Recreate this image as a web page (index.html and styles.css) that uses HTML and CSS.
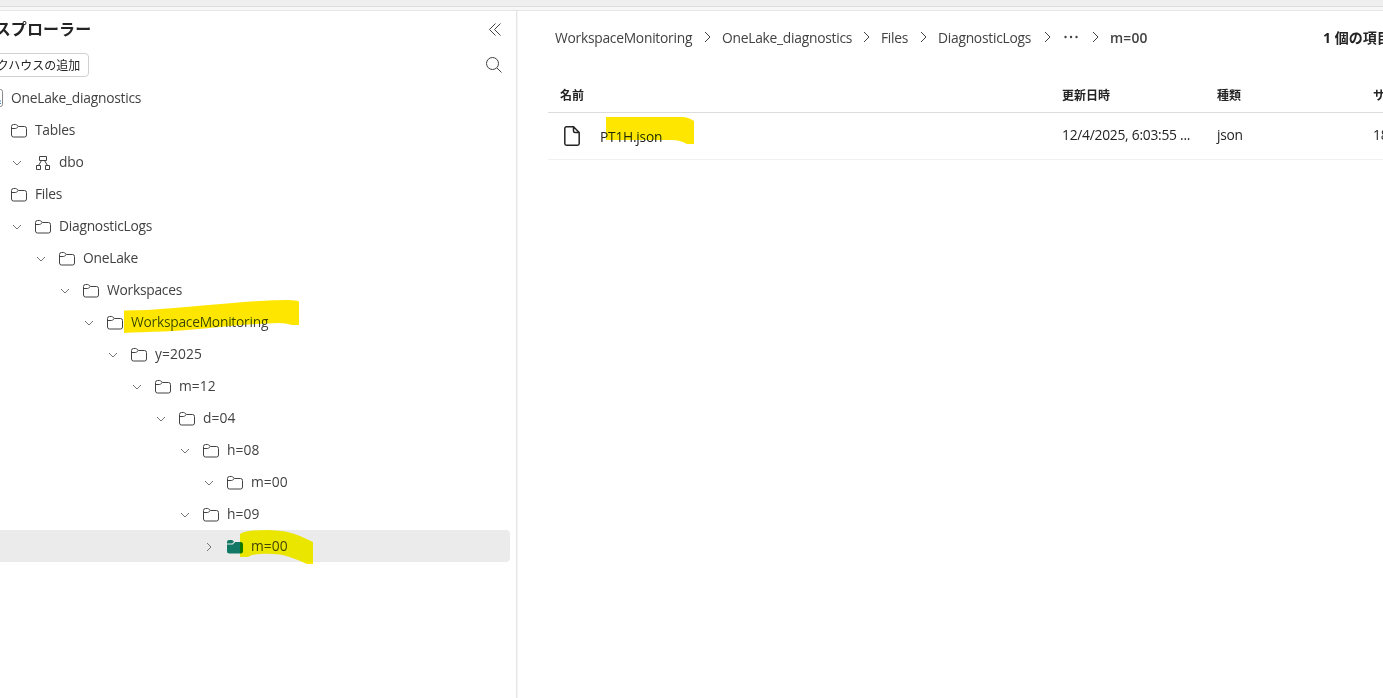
FILE: index.html
```html
<!DOCTYPE html>
<html lang="ja">
<head>
  <meta charset="UTF-8" />
  <title>OneLake_diagnostics</title>
  <link rel="stylesheet" href="styles.css">
</head>
<body>

  <!-- Shared icons -->
  <svg class="sprite" aria-hidden="true">
    <symbol id="folder" viewBox="0 0 18 16">
      <path d="M1.500 4v-.5a2 2 0 0 1 2-2h2.200q.6 0 1 .4L8.300 3.500H14.500a2 2 0 0 1 2 2v6.500a2 2 0 0 1-2 2h-11a2 2 0 0 1-2-2zM1.500 5.500H5.400q.7 0 1.100-.4L8.300 3.500" />
    </symbol>
    <symbol id="folder-filled" viewBox="0 0 18 16">
      <path d="M1 4.500V3.300A2.200 2.200 0 0 1 3.200 1h2.500q.7 0 1.200.5L8 2.700 6.500 4.200q-.3.300-.8.300zM1 5.500h5q.7 0 1.200-.5L9.200 3H14.800A2.200 2.200 0 0 1 17 5.200v7A2.200 2.200 0 0 1 14.800 14.500H3.200A2.200 2.200 0 0 1 1 12.200z" />
    </symbol>
    <symbol id="chevron-down" viewBox="0 0 10 10">
      <path d="M1 3l4 4 4-4" />
    </symbol>
    <symbol id="chevron-right" viewBox="0 0 10 10">
      <path d="M3 1l4 4-4 4" />
    </symbol>
    <symbol id="chevron-crumb" viewBox="0 0 12 12">
      <path d="M3 1l5 5-5 5" />
    </symbol>
  </svg>

  <div class="topbar"></div>

  <div class="container">
    <aside class="explorer">
      <div class="explorer-header">
        <h1>エクスプローラー</h1>
        <svg class="icon-collapse" viewBox="0 0 12 13"><path d="M6.500.5l-6 6 6 6M11.500.5l-6 6 6 6" /></svg>
      </div>
      <div class="explorer-tools">
        <button class="add-button">レイクハウスの追加</button>
        <svg class="icon-search" viewBox="0 0 16 16"><circle cx="6.500" cy="6.500" r="6" /><path d="M11 11l4.500 4.500" /></svg>
      </div>

      <ul class="tree">
        <li class="row root">
          <svg class="lakehouse" viewBox="0 0 16 18"><rect x=".5" y=".5" width="15" height="17" rx="2" /><path d="M9 12h5M9 14.500h5" /></svg>
          <span class="label">OneLake_diagnostics</span>
        </li>
        <li class="row level-0"><svg class="folder"><use href="#folder" /></svg><span class="label">Tables</span></li>
        <li class="row level-1">
          <svg class="chevron"><use href="#chevron-down" /></svg>
          <svg class="schema" viewBox="0 0 18 16"><path d="M5.500 1.500h7v4h-7zM2.500 10.500h4v4h-4zM11.500 10.500h4v4h-4zM7.500 5.500l-3 5M10.500 5.500l3 5" /></svg>
          <span class="label">dbo</span>
        </li>
        <li class="row level-0"><svg class="folder"><use href="#folder" /></svg><span class="label">Files</span></li>
        <li class="row level-1"><svg class="chevron"><use href="#chevron-down" /></svg><svg class="folder"><use href="#folder" /></svg><span class="label">DiagnosticLogs</span></li>
        <li class="row level-2"><svg class="chevron"><use href="#chevron-down" /></svg><svg class="folder"><use href="#folder" /></svg><span class="label">OneLake</span></li>
        <li class="row level-3"><svg class="chevron"><use href="#chevron-down" /></svg><svg class="folder"><use href="#folder" /></svg><span class="label">Workspaces</span></li>
        <li class="row level-4">
          <svg class="chevron"><use href="#chevron-down" /></svg><svg class="folder"><use href="#folder" /></svg>
          <span class="label">WorkspaceMonitoring
            <svg class="marker marker-workspace" viewBox="0 0 175 34"><path d="M0 10.500Q22 10.500 50 8T120 2Q150 0 165 0Q172 0 175 1.500V25H168Q162 23 155 23Q125 24 95 27T40 31.500Q15 32 0 33z" /></svg>
          </span>
        </li>
        <li class="row level-5"><svg class="chevron"><use href="#chevron-down" /></svg><svg class="folder"><use href="#folder" /></svg><span class="label number">y=2025</span></li>
        <li class="row level-6"><svg class="chevron"><use href="#chevron-down" /></svg><svg class="folder"><use href="#folder" /></svg><span class="label number">m=12</span></li>
        <li class="row level-7"><svg class="chevron"><use href="#chevron-down" /></svg><svg class="folder"><use href="#folder" /></svg><span class="label number">d=04</span></li>
        <li class="row level-8"><svg class="chevron"><use href="#chevron-down" /></svg><svg class="folder"><use href="#folder" /></svg><span class="label number">h=08</span></li>
        <li class="row level-9"><svg class="chevron"><use href="#chevron-down" /></svg><svg class="folder"><use href="#folder" /></svg><span class="label number">m=00</span></li>
        <li class="row level-8"><svg class="chevron"><use href="#chevron-down" /></svg><svg class="folder"><use href="#folder" /></svg><span class="label number">h=09</span></li>
        <li class="row level-9 selected">
          <svg class="chevron"><use href="#chevron-right" /></svg><svg class="folder filled"><use href="#folder-filled" /></svg>
          <span class="label number">m=00
            <svg class="marker marker-folder" viewBox="0 0 73 34"><path d="M0 4Q7 0 27 0Q47 0 60 6L73 12V34H67Q50 26 40 24.500Q15 22 8 27H0z" /></svg>
          </span>
        </li>
      </ul>
    </aside>

    <main class="content">
      <div class="content-header">
        <nav class="breadcrumb">
          <span class="crumb crumb-workspace">WorkspaceMonitoring</span>
          <svg class="separator"><use href="#chevron-crumb" /></svg>
          <span class="crumb crumb-lakehouse">OneLake_diagnostics</span>
          <svg class="separator"><use href="#chevron-crumb" /></svg>
          <span class="crumb crumb-files">Files</span>
          <svg class="separator"><use href="#chevron-crumb" /></svg>
          <span class="crumb crumb-logs">DiagnosticLogs</span>
          <svg class="separator"><use href="#chevron-crumb" /></svg>
          <svg class="more" viewBox="0 0 18 10"><circle cx="3.500" cy="4" r="1.200" /><circle cx="9" cy="4" r="1.200" /><circle cx="14.500" cy="4" r="1.200" /></svg>
          <svg class="separator"><use href="#chevron-crumb" /></svg>
          <span class="crumb current">m=00</span>
        </nav>
        <span class="count">1 個の項目</span>
      </div>

      <div class="files">
        <div class="file-row head">
          <span class="cell-name">名前</span>
          <span>更新日時</span>
          <span>種類</span>
          <span>サイズ</span>
        </div>
        <div class="file-row">
          <span class="cell-name">
            <svg class="icon-file" viewBox="0 0 16 20"><path d="M2.500.8H9.500L15.200 6.500V17.500a1.700 1.700 0 0 1-1.700 1.700h-11A1.700 1.700 0 0 1 .8 17.500v-15A1.700 1.700 0 0 1 2.500.8zM9.500.8V5a1.500 1.500 0 0 0 1.500 1.500h4.200" /></svg>
            <span class="file-name">PT1H.json
              <svg class="marker marker-file" viewBox="0 0 88 27"><path d="M0 0H76Q82 0 88 4V27H81Q74 23 66 23H0z" /></svg>
            </span>
          </span>
          <span class="cell">12/4/2025, 6:03:55 ...</span>
          <span class="cell">json</span>
          <span class="cell">18 KB</span>
        </div>
      </div>
    </main>
  </div>

</body>
</html>
```
FILE: styles.css
```css
* {
  box-sizing: border-box;
}

body {
  margin: 0;
  height: 698px;
  overflow: hidden;
  background-color: #fff;
  color: #424242;
  font-family: 'Open Sans', 'Noto Sans CJK JP', sans-serif;
  font-size: 13.8px;
  letter-spacing: -0.25px;
}

svg {
  display: block;
  flex: none;
  fill: none;
  stroke: #424242;
  overflow: visible;
}

.sprite {
  position: absolute;
  width: 0;
  height: 0;
}

.topbar {
  height: 11px;
  background: linear-gradient(#efefef 0 6px, #dedede 6px 7px, #f7f7f7 7px 10px, #e5e5e5 10px 11px);
}

.container {
  display: flex;
  height: 687px;
}

/* The panel is scrolled a little to the left */
.explorer {
  flex: none;
  width: 555px;
  margin-left: -37px;
  padding-right: 1px;
  border-right: 1px solid #f5f5f5;
  box-shadow: inset -1px 0 #e6e6e6;
}

.explorer-header,
.explorer-tools {
  display: flex;
  align-items: center;
  justify-content: space-between;
}

.explorer-header {
  height: 37px;
  padding-right: 15px;
}

h1 {
  margin: 0 0 2px;
  color: #242424;
  font-size: 16px;
  line-height: 24px;
  font-weight: bold;
  letter-spacing: 0.1px;
}

.icon-collapse {
  width: 12px;
  height: 13px;
}

.explorer-tools {
  height: 34px;
  padding-right: 14px;
}

.add-button {
  height: 24px;
  padding: 2px 8px 0 9px;
  border: 1px solid #d1d1d1;
  border-radius: 4px;
  background-color: #fff;
  color: #242424;
  font-family: inherit;
  font-size: 12px;
  line-height: 20px;
  letter-spacing: 0;
}

.icon-search {
  width: 16px;
  height: 16px;
  margin-bottom: 1px;
}

.tree {
  margin: 0;
  padding: 0;
  list-style: none;
}

.row {
  display: flex;
  align-items: center;
  height: 32px;
  margin-right: 6px;
}

.label {
  position: relative;
  padding-bottom: 2px;
  white-space: nowrap;
}

.number {
  letter-spacing: 0.1px;
}

.root { padding-left: 24px; }
.level-0 { padding-left: 47px; }
.level-1 { padding-left: 49px; }
.level-2 { padding-left: 73px; }
.level-3 { padding-left: 97px; }
.level-4 { padding-left: 121px; }
.level-5 { padding-left: 145px; }
.level-6 { padding-left: 169px; }
.level-7 { padding-left: 193px; }
.level-8 { padding-left: 217px; }
.level-9 { padding-left: 241px; }

.lakehouse {
  width: 16px;
  height: 18px;
  margin-right: 8px;
  stroke: #888;
}

.lakehouse path {
  stroke: #3b78d8;
}

.folder,
.schema {
  width: 18px;
  height: 16px;
  margin: 2px 7px 0 0;
}

.chevron {
  width: 10px;
  height: 10px;
  margin: 1px 12px 0 0;
  stroke: #757575;
}

.selected {
  border-radius: 4px;
  background-color: #ebebeb;
}

.filled {
  fill: #117865;
  stroke: none;
}

/* Highlighter strokes */
.marker {
  position: absolute;
  fill: #ffe600;
  stroke: none;
  mix-blend-mode: darken;
}

.marker-workspace {
  left: -7px;
  top: -12px;
  width: 175px;
  height: 34px;
}

.marker-folder {
  left: -11px;
  top: -6px;
  width: 73px;
  height: 34px;
}

.marker-file {
  left: 6px;
  top: -10px;
  width: 88px;
  height: 27px;
}

.content {
  flex: 1;
  min-width: 0;
  padding-left: 30px;
  overflow: hidden;
}

.content-header {
  display: flex;
  align-items: center;
  height: 54px;
  padding-left: 7px;
  white-space: nowrap;
}

.breadcrumb {
  display: flex;
  align-items: center;
  width: 768px;
  flex: none;
}

.separator {
  width: 12px;
  height: 12px;
  margin: 0 8px 2px 10px;
}

.crumb {
  padding-bottom: 2px;
}

.crumb-workspace { width: 137px; }
.crumb-lakehouse { width: 129px; }
.crumb-files { width: 27px; }
.crumb-logs { width: 94px; }

.more {
  width: 18px;
  height: 10px;
  fill: #424242;
  stroke: none;
}

.current {
  font-weight: 600;
  letter-spacing: 0.2px;
}

.count {
  margin-bottom: 2px;
  color: #242424;
  font-size: 14px;
  font-weight: bold;
  letter-spacing: 0;
}

.file-row {
  display: grid;
  grid-template-columns: 514px 155px 156px 120px;
  align-items: center;
  height: 47px;
  border-bottom: 1px solid #f0f0f0;
  color: #242424;
  white-space: nowrap;
}

.head {
  height: 48px;
  padding-top: 13px;
  border-color: #dcdcdc;
  font-size: 12px;
  font-weight: bold;
  letter-spacing: 0;
}

.cell {
  padding-bottom: 4px;
}

.cell-name {
  display: flex;
  align-items: center;
  padding-left: 12px;
}

.icon-file {
  width: 16px;
  height: 20px;
  margin: 0 20px 0 4px;
  stroke: #242424;
  stroke-width: 1.5;
}

.file-name {
  position: relative;
}
```
